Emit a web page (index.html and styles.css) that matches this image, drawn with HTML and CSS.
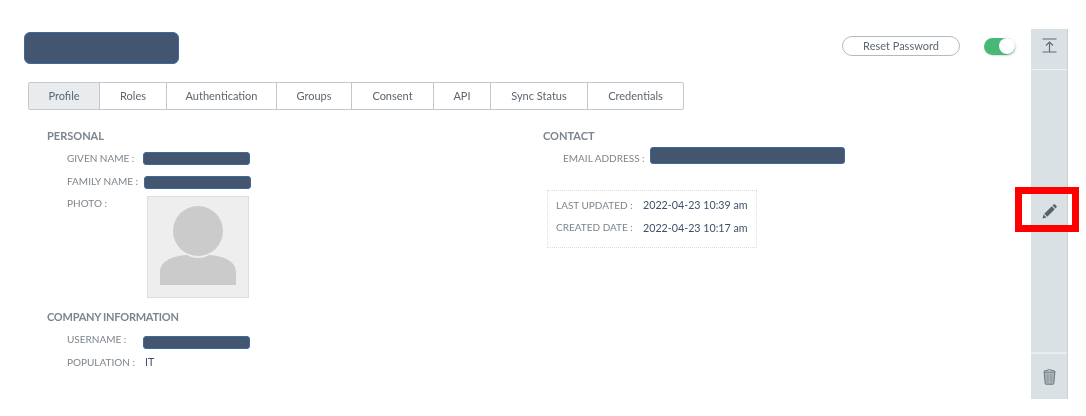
FILE: index.html
```html
<!DOCTYPE html>
<html lang="en">
<head>
    <meta charset="UTF-8">
    <title>User Profile</title>
    <link rel="stylesheet" href="styles.css">
</head>
<body>
    <div class="page">
        <div class="main">
            <div class="header">
                <div class="blot title-blot"></div>
                <div class="actions">
                    <button type="button" class="reset-btn">Reset Password</button>
                    <div class="toggle"><span class="knob"></span></div>
                </div>
            </div>

            <div class="tabs">
                <div class="tab active">Profile</div>
                <div class="tab">Roles</div>
                <div class="tab">Authentication</div>
                <div class="tab">Groups</div>
                <div class="tab">Consent</div>
                <div class="tab">API</div>
                <div class="tab">Sync Status</div>
                <div class="tab">Credentials</div>
            </div>

            <div class="details">
                <div class="col">
                    <h3>PERSONAL</h3>
                    <div class="row">
                        <span class="label">GIVEN NAME :</span>
                        <div class="blot value-blot"></div>
                    </div>
                    <div class="row">
                        <span class="label">FAMILY NAME :</span>
                        <div class="blot value-blot shifted"></div>
                    </div>
                    <div class="row photo-row">
                        <span class="label">PHOTO :</span>
                        <div class="photo">
                            <svg width="100" height="100" viewBox="0 0 100 100">
                                <circle cx="50" cy="34" r="25" fill="#cbcbcb"/>
                                <path d="M12 88V75C12 65 23 59 39 58C45 62 55 62 61 58C77 59 88 65 88 75V88Z" fill="#cbcbcb"/>
                            </svg>
                        </div>
                    </div>
                    <h3 class="company">COMPANY INFORMATION</h3>
                    <div class="row">
                        <span class="label">USERNAME :</span>
                        <div class="blot value-blot lowered"></div>
                    </div>
                    <div class="row">
                        <span class="label">POPULATION :</span>
                        <span class="value indented">IT</span>
                    </div>
                </div>

                <div class="col">
                    <h3>CONTACT</h3>
                    <div class="row">
                        <span class="label email-label">EMAIL ADDRESS :</span>
                        <div class="blot email-blot"></div>
                    </div>
                    <div class="dates">
                        <div class="date-row">
                            <span class="date-label">LAST UPDATED :</span>
                            <span class="value">2022-04-23 10:39 am</span>
                        </div>
                        <div class="date-row">
                            <span class="date-label">CREATED DATE :</span>
                            <span class="value">2022-04-23 10:17 am</span>
                        </div>
                    </div>
                </div>
            </div>
        </div>

        <div class="sidebar">
            <div class="side-btn side-top">
                <svg width="15" height="15" viewBox="0 0 15 15" fill="none" stroke="#5f6b76" stroke-width="1.2">
                    <path d="M0.5 1H14.5M0.5 14H14.5M7.5 13.5V4M4 7.5L7.5 4L11 7.5"/>
                </svg>
            </div>
            <div class="side-btn side-edit">
                <svg width="15" height="15" viewBox="0 0 16 16" fill="#56616c">
                    <path d="M0.5 15.5L1.6 11.2L4.8 14.4Z"/>
                    <path d="M2.4 10.4L10.4 2.4L13.6 5.6L5.6 13.6Z"/>
                    <path d="M11.2 1.6L12.3 0.6C12.8 0.1 13.4 0.1 13.9 0.6L15.4 2.1C15.9 2.6 15.9 3.2 15.4 3.7L14.4 4.8Z"/>
                </svg>
            </div>
            <div class="side-btn side-trash">
                <svg width="13" height="16" viewBox="0 0 14 17" fill="#a9b1b7" stroke="#6c7780" stroke-width="1.1">
                    <path d="M1.2 3L2.4 15.5C2.5 16 2.8 16.3 3.3 16.3H10.7C11.2 16.3 11.5 16 11.6 15.5L12.8 3Z"/>
                    <path d="M1 3C1.5 1.6 4 1.2 4.8 1.2C5 .6 9 .6 9.2 1.2C10 1.2 12.5 1.6 13 3" fill="none"/>
                    <path d="M5.2 5.5V14M8.8 5.5V14" fill="none" stroke="#8b959d"/>
                </svg>
            </div>
        </div>

        <div class="highlight"></div>
    </div>
</body>
</html>
```

FILE: styles.css
```css
body {
    margin: 0;
    background-color: #fff;
    font-family: Lato, "Open Sans", sans-serif;
    color: #5c6670;
}

.page {
    position: relative;
    display: flex;
    height: 416px;
    padding: 29px 18px 0 24px;
    box-sizing: border-box;
    filter: blur(0.35px);
}

.main {
    flex: 1;
    padding: 3px 16px 0 0;
}

.header {
    display: flex;
    justify-content: space-between;
    align-items: flex-start;
}

.blot {
    background-color: #44566f;
    border: 1px solid #3b6a9b;
    box-sizing: border-box;
    border-radius: 3px;
}

.title-blot {
    width: 155px;
    height: 32px;
    border-radius: 6px;
}

.actions {
    display: flex;
    align-items: center;
    gap: 24px;
    padding-top: 4px;
}

.reset-btn {
    width: 118px;
    height: 20px;
    padding: 0 0 2px;
    background: #fff;
    border: 1px solid #b4b9bd;
    border-radius: 10px;
    font-family: inherit;
    font-size: 11px;
    color: #5c6670;
}

.toggle {
    display: flex;
    justify-content: flex-end;
    width: 31px;
    height: 17px;
    background-color: #47b878;
    border-radius: 9px;
    box-shadow: 1px 1px 2px rgba(0, 0, 0, 0.15);
}

.knob {
    width: 16px;
    height: 16px;
    margin-top: 0.5px;
    background-color: #fff;
    border-radius: 50%;
}

.tabs {
    display: inline-flex;
    height: 28px;
    margin: 18px 0 0 4px;
    border: 1px solid #c4c8cc;
    border-radius: 2px;
    box-sizing: border-box;
    font-size: 11px;
}

.tab {
    display: flex;
    align-items: center;
    justify-content: center;
    padding-bottom: 2px;
    box-sizing: border-box;
    border-right: 1px solid #c4c8cc;
}

.tab:nth-child(1) { width: 71px; }
.tab:nth-child(2) { width: 67px; }
.tab:nth-child(3) { width: 110px; }
.tab:nth-child(4) { width: 75px; }
.tab:nth-child(5) { width: 82px; }
.tab:nth-child(6) { width: 57px; }
.tab:nth-child(7) { width: 97px; }
.tab:nth-child(8) { width: 95px; }

.tab:last-child {
    border-right: none;
}

.tab.active {
    background-color: #e9ecef;
}

.details {
    display: grid;
    grid-template-columns: 496px 1fr;
    padding: 19px 0 0 23px;
}

h3 {
    margin: 0;
    height: 14px;
    font-size: 11px;
    line-height: 14px;
    font-weight: 700;
    color: #7d858c;
}

.company {
    margin-top: 12px;
    letter-spacing: -0.25px;
}

.row {
    display: flex;
    align-items: center;
    height: 22.5px;
    font-size: 10px;
}

h3 + .row {
    margin-top: 4px;
}

.label {
    width: 76px;
    padding-left: 20px;
    flex: none;
    color: #7d858c;
}

.email-label {
    width: 87px;
}

.value {
    color: #3f5069;
    font-size: 10.7px;
}

.indented {
    margin-left: 2px;
}

.value-blot {
    width: 107px;
    height: 13px;
}

.shifted {
    margin: 4px 0 0 1px;
}

.lowered {
    margin-top: 6px;
}

.photo-row {
    align-items: flex-start;
    height: auto;
    padding-top: 4px;
}

.photo-row .label {
    padding-top: 1px;
}

.photo {
    width: 102px;
    height: 102px;
    margin-left: 4px;
    background-color: #eee;
    border: 1px solid #ddd;
    box-sizing: border-box;
}

.photo svg {
    display: block;
}

.email-blot {
    width: 195px;
    height: 17px;
    margin-top: -6px;
}

.dates {
    width: 210px;
    margin: 20px 0 0 4px;
    padding: 3px 0 8px 8px;
    border: 1px dotted #ddd;
    box-sizing: border-box;
}

.date-row {
    display: flex;
    align-items: center;
    height: 22.5px;
}

.date-label {
    width: 87px;
    flex: none;
    font-size: 10px;
    color: #7d858c;
}

.sidebar {
    display: flex;
    flex-direction: column;
    width: 37px;
    height: 370px;
    background-color: #dae1e4;
    border-right: 1px solid #c9cfd3;
    box-sizing: border-box;
}

.side-btn {
    display: flex;
    align-items: center;
    justify-content: center;
}

.side-top {
    height: 41px;
    padding-bottom: 7px;
    box-sizing: border-box;
    border-bottom: 1px solid #f0f3f4;
}

.side-edit {
    flex: 1;
}

.side-trash {
    height: 47px;
    box-sizing: border-box;
    border-top: 2px solid #e8edef;
}

.highlight {
    position: absolute;
    left: 1015px;
    top: 187px;
    width: 64px;
    height: 45px;
    border: 7px solid #fe0000;
    box-sizing: border-box;
}
```
